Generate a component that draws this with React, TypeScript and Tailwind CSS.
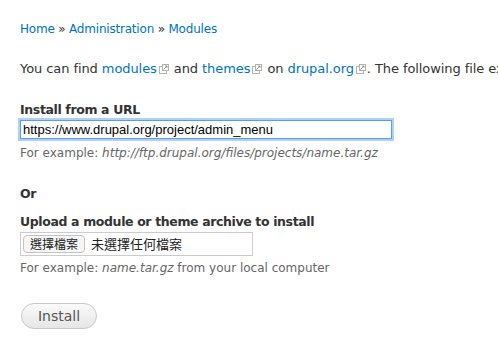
import React from "react";

function ExtIcon() {
  return (
    <svg width="10" height="10" viewBox="0 0 10 10" className="inline-block ml-[2px] mr-[1px] align-[-1px]">
      <rect x="0.5" y="2.5" width="7" height="7" fill="#fff" stroke="#b3b3b3" />
      <rect x="3.5" y="0.5" width="6" height="6" fill="#fff" stroke="#b3b3b3" />
      <path d="M4.5 5.5 L8 2 M6 2 H8 V4" stroke="#999" fill="none" />
    </svg>
  );
}

export default function App() {
  const font = { fontFamily: '"DejaVu Sans", Verdana, sans-serif' };
  return (
    <div className="w-[498px] h-[351px] overflow-hidden bg-white text-[#333] pl-[20px]" style={font}>
      <div className="pt-[20px] h-[40px] text-[12px] tracking-[-0.2px] leading-[18px] text-[#0074bd]">
        <a>Home</a> <span className="text-[#333]">»</span> <a>Administration</a>{" "}
        <span className="text-[#333]">»</span> <a>Modules</a>
      </div>
      <p className="mt-[19px] whitespace-nowrap overflow-hidden text-[13px] tracking-[-0.08px] leading-[20px]">
        You can find <a className="text-[#0074bd]">modules</a>
        <ExtIcon /> and <a className="text-[#0074bd]">themes</a>
        <ExtIcon /> on <a className="text-[#0074bd]">drupal.org</a>
        <ExtIcon />. The following file ex
      </p>
      <div className="mt-[23px]">
        <label className="block text-[12.5px] tracking-[-0.37px] font-bold leading-[16px]">Install from a URL</label>
        <input
          readOnly
          value="https://www.drupal.org/project/admin_menu"
          className="mt-[2px] block w-[372px] h-[19px] border border-[#5a9cf0] outline outline-[2px] outline-[#8cbcf8]/70 px-[2px] text-[13px] text-black"
          style={{ fontFamily: '"Liberation Sans", Arial, sans-serif' }}
        />
        <div className="mt-[6px] text-[12px] leading-[16px] text-[#666]">
          For example: <em>http://ftp.drupal.org/files/projects/name.tar.gz</em>
        </div>
      </div>
      <div className="mt-[25px] text-[12.5px] tracking-[-0.37px] font-bold leading-[16px]">Or</div>
      <div className="mt-[12px]">
        <label className="block text-[12.5px] tracking-[-0.37px] font-bold leading-[16px]">
          Upload a module or theme archive to install
        </label>
        <div className="mt-[2px] flex items-center w-[233px] h-[24px] border border-[#cccccc] pl-[2px]">
          <span
            className="h-[18px] px-[6px] border border-[#c4c4c4] rounded-[4px] bg-[#f6f6f6] text-[12px] leading-[16px] text-[#222]"
            style={{ fontFamily: '"Noto Sans CJK TC", sans-serif' }}
          >
            選擇檔案
          </span>
          <span className="ml-[6px] text-[13px] text-[#222]" style={{ fontFamily: '"Noto Sans CJK TC", sans-serif' }}>
            未選擇任何檔案
          </span>
        </div>
        <div className="mt-[4px] text-[12px] leading-[16px] text-[#666]">
          For example: <em>name.tar.gz</em> from your local computer
        </div>
      </div>
      <button className="mt-[27px] ml-[1px] w-[76px] h-[26px] rounded-full border border-[#c8c8c8] bg-gradient-to-b from-[#fafafa] to-[#e6e6e6] text-[14px] text-[#555]">
        Install
      </button>
    </div>
  );
}
